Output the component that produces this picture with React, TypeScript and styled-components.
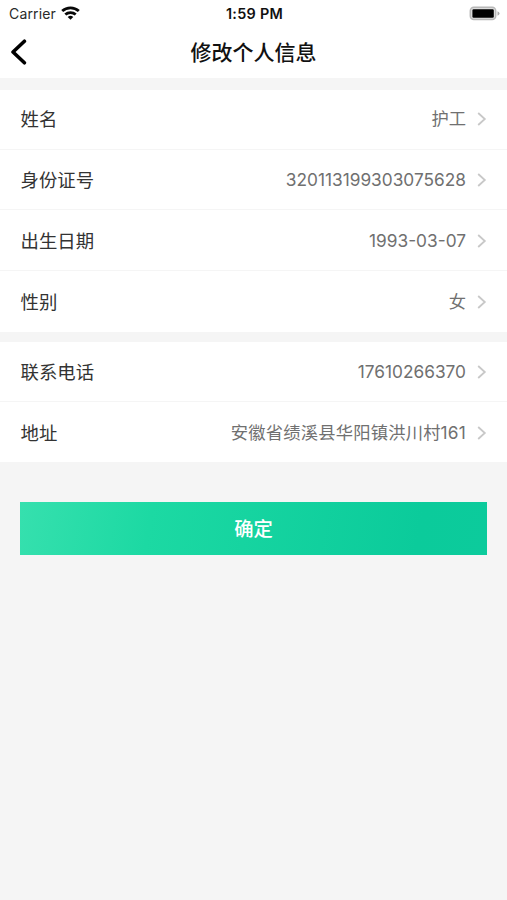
import React from "react";
import styled, { createGlobalStyle } from "styled-components";

const GlobalStyle = createGlobalStyle`
  * { box-sizing: border-box; }
  body {
    margin: 0;
    background: #f5f5f5;
    font-family: Inter, "Noto Sans CJK SC", sans-serif;
  }
`;

const Screen = styled.main`
  display: flex;
  flex-direction: column;
  height: 900px;
  background: #f5f5f5;
  overflow: hidden;
`;

const StatusBar = styled.div`
  display: grid;
  grid-template-columns: 1fr auto 1fr;
  align-items: center;
  height: 27px;
  padding: 0 7px 0 9px;
  background: #fff;
  color: #111;
`;

const Carrier = styled.div`
  display: flex;
  align-items: center;
  gap: 5.5px;
  font-size: 14px;
  line-height: 27px;
  letter-spacing: 0.15px;
  color: #2a2a2a;
  svg { margin-bottom: 2px; }
`;

const Clock = styled.div`
  padding-top: 1px;
  font-size: 14.4px;
  line-height: 26px;
  font-weight: 600;
  letter-spacing: 0.3px;
`;

const Battery = styled.div`
  display: flex;
  justify-content: flex-end;
`;

const NavBar = styled.header`
  display: grid;
  grid-template-columns: 40px 1fr 40px;
  align-items: center;
  height: 51px;
  background: #fff;
`;

const BackButton = styled.button`
  display: flex;
  padding: 0 0 2px 10px;
  border: 0;
  background: none;
`;

const Title = styled.h1`
  margin: 0;
  text-align: center;
  font-size: 21px;
  line-height: 50px;
  font-weight: 500;
  color: #111;
`;

const Group = styled.section<{ $gap: number }>`
  margin-top: ${(p) => p.$gap}px;
  background: #fff;
`;

const Row = styled.div<{ $height: number; $top: number; $bottom: number }>`
  display: flex;
  align-items: center;
  height: ${(p) => p.$height}px;
  padding: ${(p) => p.$top}px 20px ${(p) => p.$bottom}px 20.5px;
  &:not(:last-child) { border-bottom: 1px solid #f5f5f5; }
`;

const Label = styled.span`
  flex: 1;
  font-size: 18.4px;
  line-height: 28px;
  color: #333;
`;

const Value = styled.span<{ $tracking: number }>`
  margin-right: 10px;
  font-size: 17.3px;
  line-height: 28px;
  letter-spacing: ${(p) => p.$tracking}px;
  color: #707070;
`;

const Submit = styled.button`
  height: 53px;
  margin: 40px 20px 0;
  padding: 0 0 1px;
  border: 0;
  background: linear-gradient(100deg, #36e0ae 0%, #1cd9a3 28%, #0bcb9b 85%, #0ccb9c 100%);
  color: #fff;
  font-family: inherit;
  font-size: 19.3px;
  font-weight: 500;
`;

const WifiIcon = () => (
  <svg width="19" height="14" viewBox="0 0 19 14" fill="none" stroke="#080808" strokeWidth="2.8">
    <path d="M1.2 5.1C5.8.8 13.2.8 17.8 5.1" />
    <path d="M4.3 8.5C7.2 5.9 11.8 5.9 14.7 8.5" />
    <path d="M6.7 11Q9.5 8.6 12.3 11L9.5 13.7Z" fill="#080808" stroke="none" />
  </svg>
);

const BatteryIcon = () => (
  <svg width="31" height="15" viewBox="0 0 31 15">
    <rect x="1.3" y="1.2" width="25.4" height="12.4" rx="3.5" fill="#ddd" stroke="#b8b8b8" strokeWidth="1.5" />
    <rect x="3.4" y="3.2" width="21.4" height="8.6" rx="1.2" fill="#000" />
    <path d="M28.5 5.3Q30.5 6.2 30.5 7.5T28.5 9.7Z" fill="#aaa" />
  </svg>
);

const BackIcon = () => (
  <svg width="17" height="26" viewBox="0 0 17 26" fill="none" stroke="#000" strokeWidth="3.6" strokeLinecap="round" strokeLinejoin="round">
    <path d="M14.4 2.2L3 13L14.4 23.8" />
  </svg>
);

const ChevronIcon = () => (
  <svg width="11" height="14" viewBox="0 0 11 14" fill="none" stroke="#c8c8c8" strokeWidth="1.8">
    <path d="M2.2 1L8.8 7L2.2 13" />
  </svg>
);

type Item = {
  label: string;
  value: string;
  height: number;
  top?: number;
  bottom?: number;
  tracking?: number;
};

const personal: Item[] = [
  { label: "姓名", value: "护工", height: 60, bottom: 2 },
  { label: "身份证号", value: "320113199303075628", height: 60, top: 1 },
  { label: "出生日期", value: "1993-03-07", height: 61, top: 2 },
  { label: "性别", value: "女", height: 61 },
];

const contact: Item[] = [
  { label: "联系电话", value: "17610266370", height: 60 },
  { label: "地址", value: "安徽省绩溪县华阳镇洪川村161", height: 60, top: 2, tracking: 0.2 },
];

const Rows = ({ items }: { items: Item[] }) => (
  <>
    {items.map((item) => (
      <Row key={item.label} $height={item.height} $top={item.top ?? 0} $bottom={item.bottom ?? 0}>
        <Label>{item.label}</Label>
        <Value $tracking={item.tracking ?? 0}>{item.value}</Value>
        <ChevronIcon />
      </Row>
    ))}
  </>
);

export default function App() {
  return (
    <Screen>
      <GlobalStyle />
      <StatusBar>
        <Carrier>Carrier<WifiIcon /></Carrier>
        <Clock>1:59 PM</Clock>
        <Battery><BatteryIcon /></Battery>
      </StatusBar>
      <NavBar>
        <BackButton aria-label="返回"><BackIcon /></BackButton>
        <Title>修改个人信息</Title>
      </NavBar>
      <Group $gap={12}><Rows items={personal} /></Group>
      <Group $gap={10}><Rows items={contact} /></Group>
      <Submit>确定</Submit>
    </Screen>
  );
}
